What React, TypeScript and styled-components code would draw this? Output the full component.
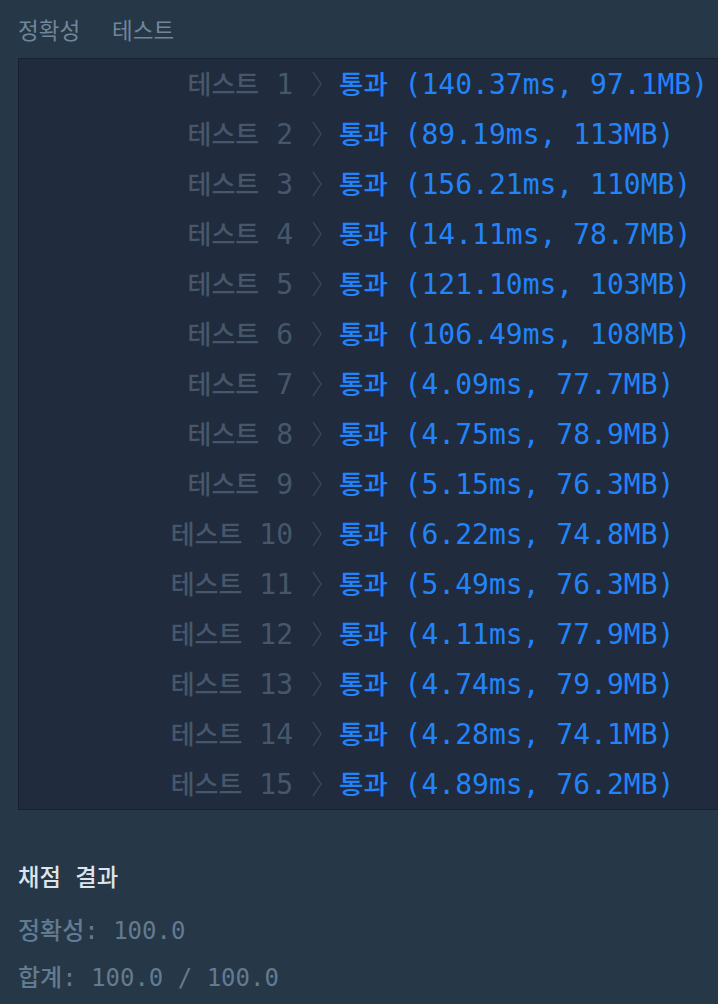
import React from "react";
import styled, { createGlobalStyle } from "styled-components";

const GlobalStyle = createGlobalStyle`
  html, body {
    margin: 0;
    padding: 0;
    background: #263747;
  }
  body {
    font-family: "DejaVu Sans Mono", "Liberation Mono", "Noto Sans CJK KR", monospace;
    overflow: hidden;
  }
`;

const Page = styled.div`
  padding-left: 18px;
  height: 1004px;
`;

const TabBar = styled.div`
  display: flex;
  align-items: center;
  gap: 32px;
  height: 58px;
  padding-bottom: 1px;
  box-sizing: border-box;
`;

const Tab = styled.span`
  font-family: "Noto Sans CJK KR", sans-serif;
  font-size: 22.5px;
  color: #6f869b;
`;

const ResultBox = styled.div`
  background: #202b3d;
  border: 1px solid #172130;
  border-right: none;
`;

const Row = styled.div`
  display: grid;
  grid-template-columns: 274px 10px 1fr;
  column-gap: 18px;
  align-items: center;
  height: 50px;
  padding-bottom: 4px;
  box-sizing: border-box;
  font-size: 28px;
  white-space: pre;
`;

const Label = styled.div`
  text-align: right;
  color: #46576b;
`;

const Chevron = styled.svg`
  display: block;
  margin-left: 1px;
  margin-top: 4px;
`;

const Result = styled.div<{ $passed: boolean }>`
  color: ${(p) => (p.$passed ? "#2184fb" : "#f25f5c")};
`;

const Hangul = styled.span<{ $size?: number }>`
  font-family: "Noto Sans CJK KR", sans-serif;
  font-size: ${(p) => p.$size ?? 26}px;
  font-weight: 500;
`;

const Summary = styled.div`
  padding-top: 51px;
  font-size: 24px;
  white-space: pre;
`;

const SummaryTitle = styled.div`
  height: 30px;
  line-height: 30px;
  color: #dce4ec;
`;

const SummaryLine = styled.div<{ $top: number }>`
  height: 30px;
  line-height: 30px;
  margin-top: ${(p) => p.$top}px;
  color: #627b90;
`;

type test = {
  no: number;
  time: string;
  memory: string;
};

const tests: Array<test> = [
  { no: 1, time: "140.37ms", memory: "97.1MB" },
  { no: 2, time: "89.19ms", memory: "113MB" },
  { no: 3, time: "156.21ms", memory: "110MB" },
  { no: 4, time: "14.11ms", memory: "78.7MB" },
  { no: 5, time: "121.10ms", memory: "103MB" },
  { no: 6, time: "106.49ms", memory: "108MB" },
  { no: 7, time: "4.09ms", memory: "77.7MB" },
  { no: 8, time: "4.75ms", memory: "78.9MB" },
  { no: 9, time: "5.15ms", memory: "76.3MB" },
  { no: 10, time: "6.22ms", memory: "74.8MB" },
  { no: 11, time: "5.49ms", memory: "76.3MB" },
  { no: 12, time: "4.11ms", memory: "77.9MB" },
  { no: 13, time: "4.74ms", memory: "79.9MB" },
  { no: 14, time: "4.28ms", memory: "74.1MB" },
  { no: 15, time: "4.89ms", memory: "76.2MB" }
];

const Arrow = () => (
  <Chevron width="10" height="26" viewBox="0 0 10 26">
    <polyline points="1,1 9,13 1,25" fill="none" stroke="#384659" strokeWidth="1.4" />
  </Chevron>
);

const App = () => (
  <React.Fragment>
    <GlobalStyle />
    <Page>
      <TabBar>
        <Tab>정확성</Tab>
        <Tab>테스트</Tab>
      </TabBar>
      <ResultBox>
        {tests.map(t => (
          <Row key={t.no}>
            <Label>
              <Hangul>테스트</Hangul> {t.no}
            </Label>
            <Arrow />
            <Result $passed={true}>
              <Hangul $size={26.5}>통과</Hangul> ({t.time}, {t.memory})
            </Result>
          </Row>
        ))}
      </ResultBox>
      <Summary>
        <SummaryTitle>
          <Hangul $size={23.3}>채점</Hangul>{" "}
          <Hangul $size={23.3}>결과</Hangul>
        </SummaryTitle>
        <SummaryLine $top={23}>
          <Hangul $size={24}>정확성</Hangul>: 100.0
        </SummaryLine>
        <SummaryLine $top={17}>
          <Hangul $size={24}>합계</Hangul>: 100.0 / 100.0
        </SummaryLine>
      </Summary>
    </Page>
  </React.Fragment>
);

export default App;
